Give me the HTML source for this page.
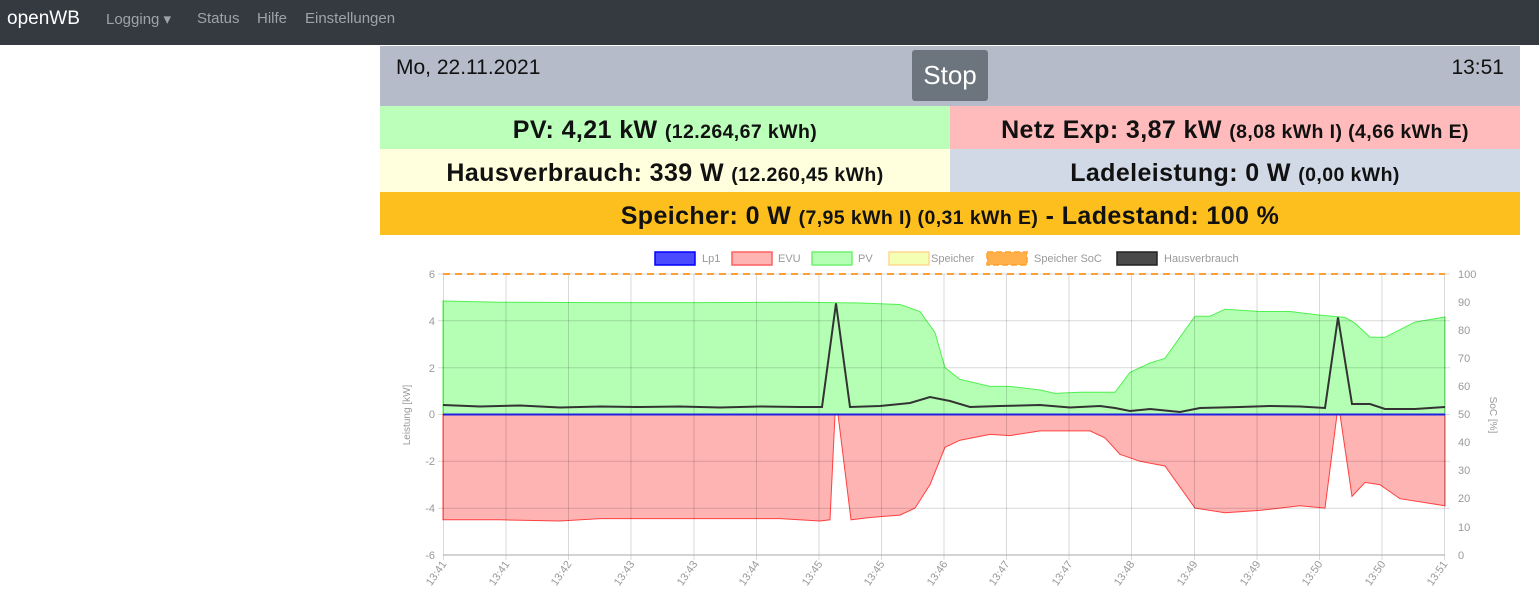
<!DOCTYPE html>
<html><head><meta charset="utf-8"><style>
body{margin:0;width:1539px;height:599px;overflow:hidden;font-family:"Liberation Sans",sans-serif;background:#fff}
.nav{height:45px;background:#343a40;position:relative}
.nav span{position:absolute;top:10px;font-size:15px;color:#a0a3a6}
.brand{left:7px;color:#fff!important;font-size:19px!important;top:8px!important}
.main{position:absolute;left:380px;top:46px;width:1140px}
.top{height:60px;background:#b5bbc8;position:relative}
.top .d{position:absolute;left:16px;top:10px;font-size:21px;color:#111}
.top .t{position:absolute;right:16px;top:10px;font-size:21px;color:#111}
.stop{position:absolute;left:532px;top:4px;width:76px;height:51px;background:#6c757d;color:#fff;font-size:26px;text-align:center;line-height:51px;border-radius:3px}
.row{display:flex;height:43px}
.row div{flex:1;text-align:center;line-height:49px;height:43px;overflow:hidden;font-weight:bold;font-size:25px;letter-spacing:0.4px;color:#111}
.row small{font-size:19.5px}
</style></head><body>
<div class="nav"><span class="brand">openWB</span><span style="left:106px">Logging ▾</span><span style="left:197px">Status</span><span style="left:257px">Hilfe</span><span style="left:305px">Einstellungen</span></div>
<div class="main">
<div class="top"><span class="d">Mo, 22.11.2021</span><div class="stop">Stop</div><span class="t">13:51</span></div>
<div class="row"><div style="background:#bbffbb">PV: 4,21 kW <small>(12.264,67 kWh)</small></div><div style="background:#ffbbbb">Netz Exp: 3,87 kW <small>(8,08 kWh I) (4,66 kWh E)</small></div></div>
<div class="row"><div style="background:#ffffdd">Hausverbrauch: 339 W <small>(12.260,45 kWh)</small></div><div style="background:#d2d9e6">Ladeleistung: 0 W <small>(0,00 kWh)</small></div></div>
<div class="row"><div style="background:#fcbf1e">Speicher: 0 W <small>(7,95 kWh I) (0,31 kWh E)</small> - Ladestand: 100 %</div></div>
</div>
<svg width="1539" height="599" style="position:absolute;left:0;top:0" font-family="Liberation Sans" font-size="11" fill="#999">
<g font-size="11">
<rect x="655" y="252" width="40" height="13" fill="#4a4aff" stroke="#0000ff" stroke-width="1.5"/><text x="702" y="262">Lp1</text>
<rect x="732" y="252" width="40" height="13" fill="#ffb4b4" stroke="#ff6060" stroke-width="1.5"/><text x="778" y="262">EVU</text>
<rect x="812" y="252" width="40" height="13" fill="#b4ffb4" stroke="#70f070" stroke-width="1.5"/><text x="858" y="262">PV</text>
<rect x="889" y="252" width="40" height="13" fill="#f4ffb4" stroke="#ffd890" stroke-width="1.5"/><text x="931" y="262">Speicher</text>
<rect x="987" y="252" width="40" height="13" fill="#ffb04a" stroke="#ffa030" stroke-width="1.5" stroke-dasharray="6 3"/><text x="1034" y="262">Speicher SoC</text>
<rect x="1117" y="252" width="40" height="13" fill="#4a4a4a" stroke="#222" stroke-width="1.5"/><text x="1164" y="262">Hausverbrauch</text>
</g>
<path d="M443 414.5 L443 301 L500 302.2 L600 302.6 L700 302.6 L800 302.2 L860 303 L900 304.5 L920 311.5 L935 332.6 L945 367.7 L960 379.4 L990 386.4 L1010 386.4 L1040 390 L1055 393.4 L1080 392.3 L1115 392.3 L1130 372.4 L1150 363 L1165 358.3 L1195 316.2 L1210 316.2 L1225 309.2 L1260 311.5 L1290 311.5 L1320 315.1 L1345 317.4 L1355 323.2 L1370 337.3 L1385 337.3 L1415 322.1 L1445 317 L1445 414.5Z" fill="#b4ffb4" stroke="#50f050" stroke-width="1"/>
<path d="M443 414.5 L443 519.8 L500 519.8 L560 521 L600 518.6 L700 518.6 L780 518.6 L820 521 L830 519.8 L835 414.5 L838 414.5 L851 519.8 L870 517.5 L900 515.1 L915 508.1 L930 484.7 L945 447.3 L960 440.2 L990 434.4 L1010 435.6 L1040 430.9 L1070 430.9 L1090 430.9 L1105 437.9 L1120 454.3 L1140 461.3 L1165 466 L1195 508.1 L1225 512.8 L1260 510.4 L1300 505.8 L1325 508.1 L1337 414.5 L1340 414.5 L1352 496.4 L1365 482.4 L1380 484.7 L1400 498.7 L1445 505.8 L1445 414.5Z" fill="#ffb4b4" stroke="#ff4040" stroke-width="1"/>
<g stroke="rgba(0,0,0,0.15)" stroke-width="1">
<path d="M438 274H1450M438 320.8H1450M438 367.7H1450M438 414.5H1450M438 461.3H1450M438 508.2H1450"/>
<path d="M443.5 274V560M506 274V560M568.5 274V560M631 274V560M694 274V560M756.5 274V560M819 274V560M881.5 274V560M944 274V560M1006.5 274V560M1069 274V560M1131.5 274V560M1194.5 274V560M1257 274V560M1319.5 274V560M1382 274V560M1444.5 274V560"/>
</g>
<path d="M443 555H1445" stroke="#aaa"/>
<path d="M443 274H1445" stroke="#ffa030" stroke-width="2" stroke-dasharray="7 5"/>
<path d="M443 414.5H1445" stroke="#2020e0" stroke-width="2"/>
<path d="M443 405 L480 406.5 L520 405.5 L560 407.5 L600 406.5 L640 407 L680 406.5 L720 407.5 L760 406.5 L800 407 L822 407 L836 303.4 L850 407 L880 406 L910 403 L930 397 L950 401 L970 407 L1000 406 L1040 405 L1070 407.5 L1100 406 L1115 408 L1130 411 L1150 409 L1180 412 L1200 408 L1240 407 L1270 406 L1300 406.5 L1325 408 L1338 317.4 L1352 404 L1370 404 L1385 409 L1415 409 L1445 407" fill="none" stroke="#333" stroke-width="2"/>
<g text-anchor="end"><text x="435" y="278">6</text><text x="435" y="325">4</text><text x="435" y="372">2</text><text x="435" y="418">0</text><text x="435" y="465">-2</text><text x="435" y="512">-4</text><text x="435" y="559">-6</text></g>
<g><text x="1458" y="278">100</text><text x="1458" y="306">90</text><text x="1458" y="334">80</text><text x="1458" y="362">70</text><text x="1458" y="390">60</text><text x="1458" y="418">50</text><text x="1458" y="446">40</text><text x="1458" y="474">30</text><text x="1458" y="502">20</text><text x="1458" y="531">10</text><text x="1458" y="559">0</text></g>
<text transform="translate(410,415) rotate(-90)" text-anchor="middle" font-size="10">Leistung [kW]</text>
<text transform="translate(1490,415) rotate(90)" text-anchor="middle" font-size="10">SoC [%]</text>
<g text-anchor="end" font-size="11">
<text transform="translate(447,564) rotate(-55)">13:41</text><text transform="translate(510,564) rotate(-55)">13:41</text><text transform="translate(572,564) rotate(-55)">13:42</text><text transform="translate(635,564) rotate(-55)">13:43</text><text transform="translate(698,564) rotate(-55)">13:43</text><text transform="translate(760,564) rotate(-55)">13:44</text><text transform="translate(823,564) rotate(-55)">13:45</text><text transform="translate(885,564) rotate(-55)">13:45</text><text transform="translate(948,564) rotate(-55)">13:46</text><text transform="translate(1010,564) rotate(-55)">13:47</text><text transform="translate(1073,564) rotate(-55)">13:47</text><text transform="translate(1135,564) rotate(-55)">13:48</text><text transform="translate(1198,564) rotate(-55)">13:49</text><text transform="translate(1261,564) rotate(-55)">13:49</text><text transform="translate(1323,564) rotate(-55)">13:50</text><text transform="translate(1386,564) rotate(-55)">13:50</text><text transform="translate(1448,564) rotate(-55)">13:51</text>
</g>
</svg>
</body></html>
